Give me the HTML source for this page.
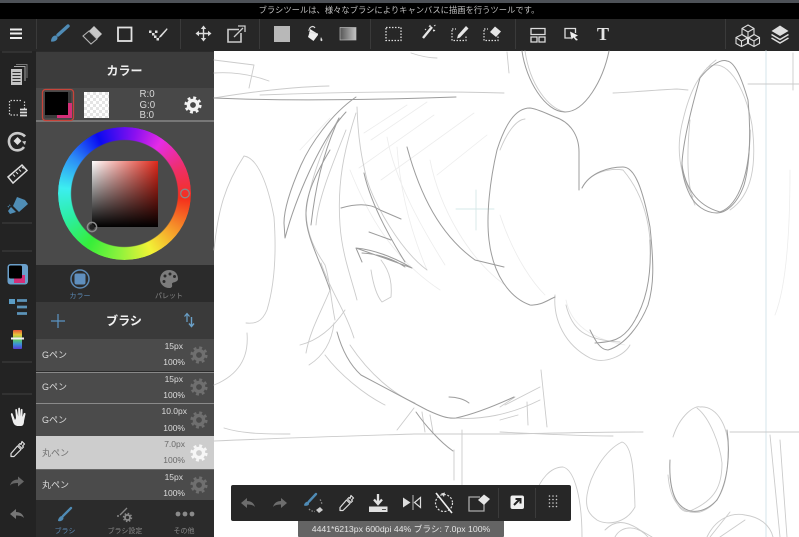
<!DOCTYPE html>
<html lang="ja"><head><meta charset="utf-8"><title>ブラシ</title>
<style>
html,body{margin:0;padding:0;background:#fff}
body{width:799px;height:537px;overflow:hidden;position:relative;font-family:"Liberation Sans","Noto Sans CJK JP",sans-serif}
#w{position:absolute;left:0;top:0;width:799px;height:537px;overflow:hidden;filter:blur(.35px)}
div{position:absolute;box-sizing:border-box}
.t{white-space:nowrap;line-height:1;text-align:center;transform:translateX(-50%)}
.r{white-space:nowrap;line-height:1;text-align:right}
.row{left:36px;width:178px;background:#4b4b4b}
svg{position:absolute;left:0;top:0}
</style></head><body><div id="w">
<div style="left:0;top:0;width:799px;height:3px;background:#4d5157"></div>
<div style="left:0;top:3px;width:799px;height:16px;background:#000"></div>
<div class="t" style="left:399px;top:6px;font-size:8.300px;color:#bdbdbd">ブラシツールは、様々なブラシによりキャンバスに描画を行うツールです。</div>
<div style="left:0;top:19px;width:799px;height:32px;background:#272727"></div>
<div style="left:0;top:51px;width:36px;height:486px;background:#232323"></div>
<div style="left:36px;top:51px;width:178px;height:486px;background:#2b2b2b"></div>
<div style="left:36px;top:52px;width:178px;height:36px;background:#3c3c3c"></div>
<div style="left:36px;top:88px;width:178px;height:33px;background:#484848"></div>
<div style="left:36px;top:120px;width:178px;height:2px;background:#777"></div>
<div style="left:36px;top:122px;width:178px;height:143px;background:#4a4a4a"></div>
<div style="left:36px;top:265px;width:178px;height:36px;background:#2b2b2b"></div>
<div style="left:36px;top:302px;width:178px;height:37px;background:#3a3a3a"></div>
<div class="row" style="top:339px;height:32px"></div>
<div class="row" style="top:372px;height:31px;border-top:1px solid #888"></div>
<div class="row" style="top:403px;height:33px;border-top:1px solid #8a8a8a"></div>
<div class="row" style="top:436px;height:33px;background:#cdcdcd"></div>
<div class="row" style="top:469px;height:31px;border-top:1px solid #666"></div>

<!-- colour wheel -->
<div style="left:58px;top:127px;width:133px;height:133px;border-radius:50%;background:conic-gradient(from 35deg,#e52ce5 0deg,#ee2f6a 30deg,#f4301c 60deg,#f6a52c 95deg,#f2f236 120deg,#8cf23c 150deg,#36ee3a 180deg,#2ceea0 210deg,#3ceef0 240deg,#2c8cf6 270deg,#0a0af0 300deg,#8a10f0 335deg,#e52ce5 360deg);-webkit-mask:radial-gradient(circle,transparent 53px,#000 54px);mask:radial-gradient(circle,transparent 53px,#000 54px)"></div>
<div style="left:92px;top:161px;width:66px;height:66px;background:linear-gradient(to bottom,rgba(0,0,0,0),#000),linear-gradient(to right,#fff,#e0281a)"></div>

<!-- checker swatch -->
<div style="left:84px;top:92px;width:25px;height:26px;background-color:#fff;background-image:conic-gradient(#e4e4e4 25%,#fff 0 50%,#e4e4e4 0 75%,#fff 0);background-size:6px 6px"></div>

<svg width="799" height="537" viewBox="0 0 799 537" fill="none">
<defs>
<g id="gear"><circle r="7.300" stroke="currentColor" stroke-width="2.600" stroke-dasharray="2.900 2.830"/><circle r="4.600" stroke="currentColor" stroke-width="3.400"/></g>
<g id="undo"><path d="M-7 0L-1-5V-2C3-2 6 0 7 4C5 1.800 2 1.500-1 1.500V5Z" fill="currentColor"/></g>
<g id="redo"><path d="M7 0L1-5V-2C-3-2-6 0-7 4C-5 1.800-2 1.500 1 1.500V5Z" fill="currentColor"/></g>
<g id="dropper"><path d="M5-7.500L7.500-5 5.500-3 6.500-2 5-.5 1.500-4 3-5.500 4-4.500ZM.5-3L4 .5-3 7.500H-6V4.500Z" stroke="currentColor" stroke-width="1.200" stroke-linejoin="round"/></g>
</defs>

<!-- canvas sketch -->
<g stroke-linecap="round" stroke-linejoin="round">
<g stroke="#dbe9ee" stroke-width="1.200"><path d="M766 51V537"/></g>
<g stroke="#d4e8e8" stroke-width=".9"><path d="M476 190V230M456 209H494"/></g>
<g stroke="#ececec" stroke-width=".8">
<path d="M364 133L407 105M371 140L427 102M359 168L434 115M381 180L474 113M437 175L487 135"/>
<path d="M300 150L330 118M350 170C370 220 395 260 440 290M430 160C440 210 470 260 505 285"/>
<path d="M790 170C790 240 785 290 775 315"/>
<path d="M500 215C515 260 535 285 545 295M566 300C570 320 585 338 625 345"/>
<path d="M397 147C400 190 410 230 427 270M387 137C395 180 420 225 445 265"/>
</g>
<g stroke="#cbcbcb" stroke-width=".9">
<path d="M214 60L254 65L249 88M214 73C230 72 250 74 269 81"/>
<path d="M214 98C250 92 290 87 329 86"/>
<path d="M260 95C340 92 430 91 504 93"/>
<path d="M411 53C420 56 428 58 437 58M507 52L509 73"/>
<path d="M214 250C218 210 225 185 244 156C258 158 268 185 274 217C276 245 276 280 267 310C262 322 255 324 246 323"/>
<path d="M247 333C248 345 246 358 238 368C232 376 222 382 214 385"/>
<path d="M339 118C320 150 308 190 306 213C307 235 315 250 325 265C330 280 330 295 335 320"/>
<path d="M346 130C330 170 318 200 316 225M356 113C344 150 337 183 340 225C342 255 352 280 357 300"/>
<path d="M357 107C358 140 362 160 367 180C375 205 400 250 427 270"/>
<path d="M321 263C330 290 345 310 354 338M306 353C310 330 322 310 330 290M309 365C325 355 332 340 334 323"/>
<path d="M300 345C320 340 335 325 345 310M325 355C340 375 365 395 385 405M350 345C370 375 395 395 415 403"/>
<path d="M371 270C373 283 376 295 382 302L391 297C392 285 391 273 381 260"/>
<path d="M414 408L397 430M422 412L425 432M430 415L433 432"/>
<path d="M224 428C240 433 257 434 290 434M214 441C280 438 350 436 414 434H514C555 433 600 432 643 432"/>
<path d="M500 432C540 434 580 436 613 436M730 432H799"/>
<path d="M454 450V480M462 430V520"/>
<path d="M456 418C480 420 510 415 540 400M500 407L515 397M505 405L540 387M500 420L518 415"/>
<path d="M541 370L547 427M527 402L528 425"/>
<path d="M613 93C635 92 655 90 677 89L688 90M748 84H799M793 53V90"/>
<path d="M525 51C530 85 548 108 565 112"/>
<path d="M500 150C506 135 515 120 525 119"/>
<path d="M582 188C590 172 610 168 623 170C640 190 648 215 650 240"/>
<path d="M555 295C553 320 565 345 590 358C605 365 625 355 630 345M566 305C572 330 585 340 620 342"/>
<path d="M693 197C680 175 675 150 683 120C690 90 700 72 716 60"/>
<path d="M707 68C725 55 745 85 752 125C757 165 752 195 730 210M695 205C690 195 685 170 690 120"/>
<path d="M673 437C680 415 695 405 700 407C718 405 730 430 728 453C728 480 722 505 700 512C680 515 670 500 668 475"/>
<path d="M697 408C710 418 720 445 722 463C722 485 716 500 690 511C680 515 672 498 670 477"/>
<path d="M622 442C632 445 634 470 635 507C625 525 605 525 597 520C590 515 585 510 587 495C590 475 605 450 622 442"/>
<path d="M563 467C550 467 540 480 535 495M563 467C575 470 582 500 582 537"/>
<path d="M605 530C615 520 625 520 640 530L652 537M615 537C620 527 635 523 648 537"/>
<path d="M707 537C715 520 730 512 745 515C760 517 770 525 773 537M710 537L730 512M720 537L745 520"/>
<path d="M770 435L780 537M780 440L787 537"/>
</g>
<g stroke="#9c9c9c" stroke-width="1">
<path d="M214 98C280 101 370 100 456 97"/>
<path d="M356 97C330 115 310 145 301 165C290 190 284 210 284 223L285 238C295 200 320 140 346 112"/>
<path d="M339 118C322 155 315 190 311 225"/>
<path d="M330 150C315 175 306 195 306 213C305 235 320 260 330 290"/>
<path d="M407 147C420 195 440 235 475 260L504 267"/>
<path d="M364 173C370 200 385 230 405 262"/>
<path d="M341 208C355 204 370 203 380 210L401 219M369 232L391 240"/>
<path d="M356 248C375 250 395 258 412 268L356 248L362 262M362 253C380 254 395 260 405 267"/>
<path d="M337 332C342 350 350 365 361 375L427 410C440 416 448 419 456 418C470 415 490 408 514 397"/>
<path d="M416 412C425 425 440 442 453 451"/>
<path d="M449 397C456 397 464 399 469 403"/>
<path d="M522 51C526 80 545 112 565 112C585 112 603 80 609 51"/>
<path d="M579 190V152C579 135 570 122 555 117C545 113 538 109 530 108C515 108 505 125 497 150C490 180 486 215 489 240C493 275 510 298 530 305C540 306 548 300 555 297"/>
<path d="M582 188C590 172 610 167 623 167C635 167 643 190 650 227C654 265 654 285 648 305C640 325 625 345 608 350C600 350 595 340 590 330"/>
<path d="M650 240C652 280 645 305 632 325C622 340 612 342 595 343"/>
<path d="M700 78C708 68 720 58 727 61C737 62 745 90 748 100C751 130 750 165 744 185C737 205 725 213 717 213C705 213 695 205 690 195C685 185 682 175 682 163C683 145 688 120 700 78"/>
<path d="M682 165C685 185 695 205 720 212C740 205 750 170 750 130"/>
<path d="M727 430C730 450 729 480 717 500C705 513 690 515 680 505C672 497 669 480 670 460"/>
</g>
</g>

<!-- toolbar separators -->
<g stroke="#3a3a3a" stroke-width="1"><path d="M36.500 19V49M180.500 19V49M259.500 19V49M370.500 19V49M515.500 19V49M725.500 19V49"/></g>
<!-- hamburger -->
<path d="M10 29.500H22M10 33.500H22M10 38H22" stroke="#eee" stroke-width="1.900"/>
<!-- brush -->
<path d="M68 26L58 35" stroke="#4f8bb5" stroke-width="3.400" stroke-linecap="round"/><path d="M51 41.500C51 38 53 35.500 55.500 35.500C57.500 36 58 38 57 39.500C55.500 41.500 53 42 51 41.500Z" fill="#4f8bb5"/>
<!-- eraser -->
<path d="M94 26L102 34L97 39L89 31Z" fill="#c8c8c8"/><path d="M89 31L83 36L91 44L97 39Z" stroke="#b5b5b5" stroke-width="1.100" fill="#2a2a2a"/>
<!-- square -->
<rect x="118" y="27.500" width="13.500" height="13.500" stroke="#e2e2e2" stroke-width="1.800"/>
<!-- dots brush -->
<path d="M149 30.500h2.500v2.500h-2.500zM152 33h2.500v2.500H152zM155 30.500h2.500v2.500H155zM156.500 38h2.500v2.500h-2.500zM154 35.500h2.500v2.500H154z" fill="#ddd"/><path d="M167 28L160 35.500L158.500 38L161 37L167.500 29.500Z" fill="#ddd"/>
<!-- move -->
<path d="M203.500 27V40M197 33.500H210" stroke="#ddd" stroke-width="1.400"/><path d="M203.500 25.500L200.800 29H206.200ZM203.500 41.500L200.800 38H206.200ZM195.500 33.500L199 30.800V36.200ZM211.500 33.500L208 30.800V36.200Z" fill="#ddd"/>
<!-- export -->
<path d="M239 29.500H228V42H241V33" stroke="#ccc" stroke-width="1.600"/><path d="M234 37L243 28M238 26H245V32" stroke="#ccc" stroke-width="1.300"/>
<!-- solid fill -->
<rect x="274" y="26" width="16" height="16" fill="#b8b8b8"/>
<!-- bucket -->
<path d="M310 29L318 34V35L313.500 41L308 37L310 31Z" fill="#eee"/><path d="M309 31C309 27 313 25 315 28" stroke="#ddd" stroke-width="1.100"/><path d="M309 32L318 34" stroke="#ddd"/><path d="M321 37C322 39 323 40 322 41C320.500 41.500 320 40 321 37Z" fill="#ddd"/>
<!-- gradient -->
<defs><linearGradient id="gg"><stop offset="0" stop-color="#555"/><stop offset="1" stop-color="#c4c4c4"/></linearGradient><linearGradient id="rb" x1="0" y1="0" x2="0" y2="1"><stop offset="0" stop-color="#e8553a"/><stop offset=".25" stop-color="#e8c83a"/><stop offset=".5" stop-color="#5ecb5e"/><stop offset=".75" stop-color="#3a8fd8"/><stop offset="1" stop-color="#5a3ad0"/></linearGradient></defs>
<rect x="340" y="27.500" width="16" height="12.500" fill="url(#gg)" stroke="#bbb" stroke-width=".7"/>
<!-- dotted selections -->
<rect x="386" y="27.500" width="15" height="13" stroke="#ddd" stroke-width="1.300" stroke-dasharray="1.500 1.500"/>
<path d="M432 27L423 38" stroke="#e6e6e6" stroke-width="2.400"/><path d="M429 27l1-1.500 1 1.500M433 30l2 .5-2 .5M434 26l1.500-1M426 30l-1-1" stroke="#ddd" stroke-width="1"/>
<path d="M452 30V40.500H466V36M452 29H456" stroke="#ddd" stroke-width="1.200" stroke-dasharray="1.500 1.500"/><path d="M466 26L468.500 28.500L460 37.500L457 38.500L458 35Z" fill="#e6e6e6"/>
<path d="M484 30V40.500H498V36M484 29H488" stroke="#ddd" stroke-width="1.200" stroke-dasharray="1.500 1.500"/><path d="M495 26.500L501 31.500L496 37L490 32Z" fill="#e6e6e6"/>
<!-- layout -->
<path d="M531 28.500H545V34.500H531ZM531 37H537V42H531ZM539 37H545V42H539Z" stroke="#ddd" stroke-width="1.300"/>
<!-- cursor select -->
<path d="M571 38H565V28.500H575.500V33" stroke="#ddd" stroke-width="1.300"/><path d="M570 31.500L578 35.500L575 37L578 40L576 40.500L573.500 37.500L571.500 39.500Z" fill="#eee"/>
<!-- cubes -->
<g stroke="#ddd" stroke-width="1.100"><path d="M748 25L754 28.500V34.500L748 38L742 34.500V28.500ZM742 28.500L748 32L754 28.500M748 32V38"/><path d="M742 34.500L747.500 38V43.500L741.500 46.500L739.500 45.500L736 43.500V37.500ZM736 37.500L741.500 41V46.500M741.500 41L747.500 38"/><path d="M754 34.500L759.500 37.500V43.500L754 46.500L748.500 43.500V38ZM748.500 38L754 41L759.500 37.500M754 41V46.500"/></g>
<!-- layers -->
<path d="M780 25.500L788.500 31L780 36L771.500 31Z" fill="#ddd"/><path d="M771.500 34.500L780 39.500L788.500 34.500M771.500 38L780 43L788.500 38" stroke="#ddd" stroke-width="1.500"/>

<!-- left rail -->
<path d="M2 52H32M2 223H32M2 251H32M2 362H32M2 394H32" stroke="#3c3c3c" stroke-width="1.200"/>
<rect x="11" y="69" width="11" height="16" fill="#c4c4c4"/><path d="M12.500 72.500H20.500M12.500 75.500H20.500M12.500 78.500H20.500M12.500 81.500H20.500" stroke="#333"/><path d="M14 66.500H25V81" stroke="#aaa" stroke-width="1"/><path d="M16 64.500H27V78" stroke="#777" stroke-width="1"/>
<path d="M21 100.500H9.500V115H18.500M24.500 109V100.500" stroke="#ccc" stroke-width="1.200" stroke-dasharray="1.500 1.500"/><path d="M20 109.500H27M20 112.500H27M20 115.500H27" stroke="#ddd" stroke-width="1.700"/>
<path d="M24 147C21 151 15 151.500 11.500 148C8 144 8 138 12 135C16 132 22 133 25 136.500" stroke="#c9c9c9" stroke-width="2.600"/><path d="M17.500 137L21.500 141L17.500 145L13.500 141Z" fill="#ddd"/><path d="M22 141.500l4-.5-1 4z" fill="#c9c9c9"/>
<path d="M8 177L22 165L27 170.500L13 183Z" stroke="#ddd" stroke-width="1.500"/><path d="M13 174.500L15 176.500M16 172L18 174M19 169.500L21 171.500M22 167L23.500 168.500" stroke="#ddd"/>
<path d="M17 197L25 200L28 204L19 212L13 206Z" fill="#4f8db5"/><path d="M11 207L16 212L10 214L8 211Z" fill="#4f8db5"/><path d="M8 207L10 205" stroke="#4f8db5" stroke-width="1.500" stroke-dasharray="1 1"/>
<rect x="7.500" y="264" width="20.500" height="20.500" rx="3" fill="#6a9fca"/><path d="M14 275H25V283H14Z" fill="#d42f78"/><rect x="9" y="265.500" width="13" height="13" rx="1.500" fill="#000"/>
<rect x="9" y="299" width="6" height="5" fill="#5b9cc4"/><path d="M17 300.500H27M17 307H27M17 313.500H27" stroke="#5b93b8" stroke-width="2.800"/>
<rect x="13" y="330" width="9" height="19" rx="1" fill="url(#rb)"/><rect x="11" y="337.500" width="13" height="2" fill="#f0f0f0"/>
<path d="M11 415L13 422C14 425 16 426 18 426H21C23 426 24 424 24 421L25.500 414C25.500 412.500 24 412.500 23.500 414L22.500 417V410C22.500 408.500 21 408.500 20.700 410V416.500L20 408.800C20 407.300 18.300 407.300 18.200 408.800V416.500L17 410C16.700 408.500 15.200 408.800 15.300 410.300L16 418L15 420L12.500 413.500C11.500 412.500 10.500 413.500 11 415Z" fill="#eee"/>
<use href="#dropper" x="17" y="449" color="#ddd"/>
<use href="#redo" x="17" y="481.500" color="#666"/>
<use href="#undo" x="17" y="514" color="#777"/>

<!-- colour swatch row -->
<rect x="42.500" y="89.500" width="31" height="31" rx="3" stroke="#c8443a" stroke-width="1.300"/>
<rect x="45" y="92" width="26" height="26" fill="#3a3a3a"/>
<path d="M57 103H72V118H57Z" fill="#d42f78"/>
<rect x="45" y="92" width="23" height="23" fill="#000"/>
<use href="#gear" transform="translate(193 105)" color="#f2f2f2"/>

<!-- wheel handles -->
<circle cx="185" cy="193.500" r="4.300" stroke="#888" stroke-width="1.300" fill="none"/>
<circle cx="92" cy="227" r="4.600" stroke="#8a8a8a" stroke-width="1.500"/><circle cx="92" cy="227" r="2.700" fill="#222"/>

<!-- colour tabs -->
<circle cx="80" cy="279" r="9" stroke="#5b89b5" stroke-width="1.500"/><rect x="74.500" y="273.500" width="11" height="11" rx="2" fill="#5f8fbe"/>
<path d="M169 270C163 270 160 275 160 279.500C160 284.500 165 288.500 170 288C173 287.500 172 285 172 284C172 281.500 177.500 283 178 279C178 273 174 270 169 270Z" fill="#7c7c7c"/><circle cx="165" cy="276" r="1.500" fill="#2b2b2b"/><circle cx="170" cy="274" r="1.500" fill="#2b2b2b"/><circle cx="174.500" cy="276.500" r="1.500" fill="#2b2b2b"/><circle cx="164" cy="281.500" r="1.500" fill="#2b2b2b"/>

<!-- brush header -->
<path d="M58 314V328M51 321H65" stroke="#5b95c4" stroke-width="1.200"/>
<path d="M187 322V314M184.500 316.500L187 313.500L189.500 316.500" stroke="#6aa0c8" stroke-width="1.200"/><path d="M191.500 317V326M189 323.500L191.500 326.500L194 323.500" stroke="#6aa0c8" stroke-width="1.400"/>

<!-- list gears -->
<use href="#gear" transform="translate(199 355)" color="#6f6f6f"/>
<use href="#gear" transform="translate(199 387)" color="#6f6f6f"/>
<use href="#gear" transform="translate(199 420)" color="#6f6f6f"/>
<use href="#gear" transform="translate(199 453)" color="#f6f6f6"/>
<use href="#gear" transform="translate(199 485)" color="#6f6f6f"/>

<!-- bottom tabs -->
<path d="M71 508L63 516" stroke="#4f8bb5" stroke-width="2.300" stroke-linecap="round"/><path d="M58 521C58 518.500 60 516 62 516C63.500 516.500 64 518 63 519.500C62 521 60 521.500 58 521Z" fill="#4f8bb5"/>
<path d="M127 508L120 515" stroke="#888" stroke-width="1.300"/><circle cx="118" cy="516" r="1" fill="#888"/><use href="#gear" transform="translate(127.500 517.500) scale(.55)" color="#888"/>
<circle cx="178" cy="514" r="2.400" fill="#8a8a8a"/><circle cx="185" cy="514" r="2.400" fill="#8a8a8a"/><circle cx="192" cy="514" r="2.400" fill="#8a8a8a"/>
</svg>

<!-- bottom toolbar -->
<div style="left:231px;top:485px;width:340px;height:36px;background:#272727;border-radius:2px"></div>
<div style="left:298px;top:521px;width:206px;height:16px;background:#646464;border-radius:0 0 1px 1px"></div>
<svg width="799" height="537" viewBox="0 0 799 537" fill="none">
<use href="#undo" x="248" y="503" color="#6d6d6d"/>
<use href="#redo" x="280" y="503" color="#6d6d6d"/>
<path d="M316 494L309 501.500" stroke="#4f8bb5" stroke-width="2.400" stroke-linecap="round"/><path d="M304 505.500C304 503.500 306 501.500 308 501.500C309 502 309.500 503.500 308.500 505C307 506 305.500 506 304 505.500Z" fill="#4f8bb5"/><path d="M320 499.500C321.500 501.500 322 503.500 321.500 505M309 509C311 511 313 511.500 315 511.500" stroke="#888" stroke-width="1.300" stroke-dasharray="1.500 1.500"/><path d="M320 507L323 510L319 513L316 510Z" fill="#ccc"/>
<use href="#dropper" x="346" y="503" color="#ddd"/>
<path d="M378 494V503M374 499.500L378 504L382 499.500" stroke="#e0e0e0" stroke-width="2.300"/><rect x="369" y="506.500" width="18.500" height="5.500" fill="#e0e0e0"/><path d="M382 509.500H386" stroke="#555"/>
<path d="M403 497.500L410.500 502.500L403 507.500Z" fill="#ddd"/><path d="M413 495V510" stroke="#bbb"/><path d="M420.500 497.500L414.500 502.500L420.500 507.500Z" stroke="#ddd" stroke-width="1.200"/>
<circle cx="444" cy="503" r="8.500" stroke="#ddd" stroke-width="1.200" stroke-dasharray="2 1.600"/><path d="M436 493L452 513" stroke="#eee" stroke-width="1.600"/><path d="M441 493.500L444 497L445 492.500Z" fill="#ddd"/>
<path d="M480 497H469V511H484V502" stroke="#aaa" stroke-width="1.300"/><path d="M478 500L484 494.500L490 499L484 505Z" fill="#e6e6e6"/>
<path d="M498.500 488V518M535.500 488V518" stroke="#3b3b3b"/>
<rect x="510.500" y="495.500" width="13.500" height="13.500" rx="2" fill="#eee"/><path d="M514 505L520 499M515.500 499H520.500V503.500" stroke="#222" stroke-width="2"/>
<g fill="#ccc"><circle cx="549.500" cy="496" r=".8"/><circle cx="553" cy="496" r=".8"/><circle cx="556.500" cy="496" r=".8"/><circle cx="549.500" cy="499.500" r=".8"/><circle cx="553" cy="499.500" r=".8"/><circle cx="556.500" cy="499.500" r=".8"/><circle cx="549.500" cy="503" r=".8"/><circle cx="553" cy="503" r=".8"/><circle cx="556.500" cy="503" r=".8"/><circle cx="549.500" cy="506.500" r=".8"/><circle cx="553" cy="506.500" r=".8"/><circle cx="556.500" cy="506.500" r=".8"/></g>
</svg>

<!-- text -->
<div class="t" style="left:603px;top:25px;font-family:'Liberation Serif',serif;font-weight:700;font-size:18px;color:#e6e6e6">T</div>
<div class="t" style="left:124.500px;top:65px;font-size:12px;font-weight:700;color:#eee">カラー</div>
<div style="left:139.500px;top:90px;font-size:9.700px;line-height:10.500px;color:#d8d8d8;white-space:nowrap">R:0<br>G:0<br>B:0</div>
<div class="t" style="left:80px;top:292.500px;font-size:7px;color:#5b89b5">カラー</div>
<div class="t" style="left:169px;top:292.500px;font-size:7px;color:#8a8a8a">パレット</div>
<div class="t" style="left:124px;top:315px;font-size:12px;font-weight:700;color:#f2f2f2">ブラシ</div>

<div style="left:42px;top:350.500px;font-size:9px;line-height:1;color:#dcdcdc;white-space:nowrap">Gペン</div>
<div style="left:42px;top:382.500px;font-size:9px;line-height:1;color:#dcdcdc;white-space:nowrap">Gペン</div>
<div style="left:42px;top:415.500px;font-size:9px;line-height:1;color:#dcdcdc;white-space:nowrap">Gペン</div>
<div style="left:42px;top:448.500px;font-size:9px;line-height:1;color:#707070;white-space:nowrap">丸ペン</div>
<div style="left:42px;top:480.500px;font-size:9px;line-height:1;color:#dcdcdc;white-space:nowrap">丸ペン</div>

<div class="r" style="right:616px;top:342px;font-size:8.500px;color:#dcdcdc">15px</div>
<div class="r" style="right:614px;top:358px;font-size:8.500px;color:#dcdcdc">100%</div>
<div class="r" style="right:616px;top:375px;font-size:8.500px;color:#dcdcdc">15px</div>
<div class="r" style="right:614px;top:391px;font-size:8.500px;color:#dcdcdc">100%</div>
<div class="r" style="right:612px;top:407px;font-size:8.500px;color:#dcdcdc">10.0px</div>
<div class="r" style="right:614px;top:424px;font-size:8.500px;color:#dcdcdc">100%</div>
<div class="r" style="right:614px;top:440px;font-size:8.500px;color:#6a6a6a">7.0px</div>
<div class="r" style="right:614px;top:456px;font-size:8.500px;color:#6a6a6a">100%</div>
<div class="r" style="right:616px;top:473px;font-size:8.500px;color:#dcdcdc">15px</div>
<div class="r" style="right:614px;top:489px;font-size:8.500px;color:#dcdcdc">100%</div>

<div class="t" style="left:65px;top:527.500px;font-size:7px;color:#5b89b5">ブラシ</div>
<div class="t" style="left:125px;top:527.500px;font-size:7px;color:#8a8a8a">ブラシ設定</div>
<div class="t" style="left:184px;top:527.500px;font-size:7px;color:#8a8a8a">その他</div>
<div class="t" style="left:401px;top:525px;font-size:8.700px;color:#e4e4e4">4441*6213px 600dpi 44% ブラシ: 7.0px 100%</div>
</div></body></html>
